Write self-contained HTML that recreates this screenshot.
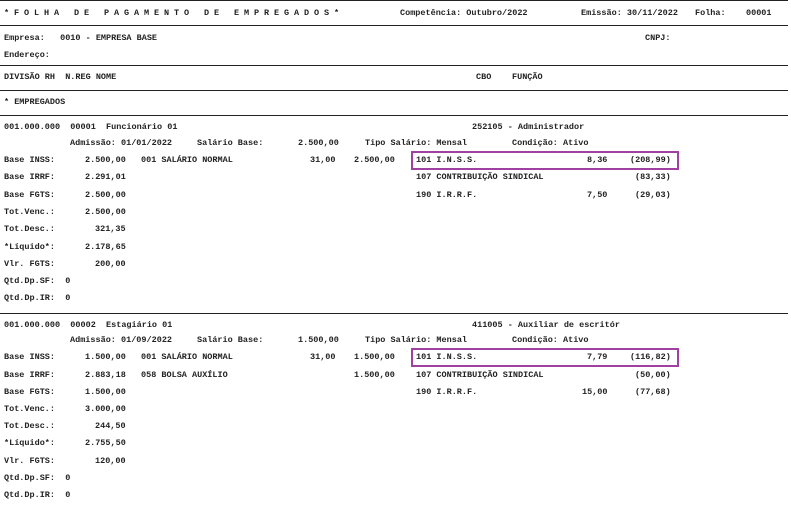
<!DOCTYPE html>
<html><head><meta charset="utf-8"><style>
body{margin:0;width:791px;height:508px;background:#fff;position:relative;overflow:hidden;font-family:"Liberation Mono",monospace;font-size:8.5px;font-weight:bold;color:#222}
i{position:absolute;font-style:normal;white-space:pre;line-height:10px}
.h{position:absolute;left:0;width:788px;height:1px;background:#222}
.box{position:absolute;border:2px solid #a040a0;box-sizing:border-box}
</style></head><body>
<div class="h" style="top:0"></div>
<i style="left:4px;top:8px;letter-spacing:4.9px">*FOLHA DE PAGAMENTO DE EMPREGADOS*</i>
<i style="left:400px;top:8px">Competência: Outubro/2022</i>
<i style="left:581px;top:8px">Emissão: 30/11/2022</i>
<i style="left:695px;top:8px">Folha:</i>
<i style="left:746px;top:8px">00001</i>
<div class="h" style="top:25px"></div>
<i style="left:4px;top:33px">Empresa:   0010 - EMPRESA BASE</i>
<i style="left:645px;top:33px">CNPJ:</i>
<i style="left:4px;top:50px">Endereço:</i>
<div class="h" style="top:65px"></div>
<i style="left:4px;top:72px">DIVISÃO RH  N.REG NOME</i>
<i style="left:476px;top:72px">CBO</i>
<i style="left:512px;top:72px">FUNÇÃO</i>
<div class="h" style="top:90px"></div>
<i style="left:4px;top:97px">* EMPREGADOS</i>
<div class="h" style="top:115px"></div>

<i style="left:4px;top:122px">001.000.000  00001  Funcionário 01</i>
<i style="left:472px;top:122px">252105 - Administrador</i>
<i style="left:70px;top:138px">Admissão: 01/01/2022</i>
<i style="left:197px;top:138px">Salário Base:</i>
<i style="left:298px;top:138px">2.500,00</i>
<i style="left:365px;top:138px">Tipo Salário: Mensal</i>
<i style="left:512px;top:138px">Condição: Ativo</i>
<i style="left:4px;top:155px">Base INSS:</i><i style="left:85px;top:155px">2.500,00</i><i style="left:141px;top:155px">001 SALÁRIO NORMAL</i><i style="left:310px;top:155px">31,00</i><i style="left:354px;top:155px">2.500,00</i>
<i style="left:416px;top:155px">101 I.N.S.S.</i><i style="left:587px;top:155px">8,36</i><i style="left:630px;top:155px">(208,99)</i>
<div class="box" style="left:411px;top:151px;width:268px;height:19px"></div>
<i style="left:4px;top:172px">Base IRRF:</i><i style="left:85px;top:172px">2.291,01</i>
<i style="left:416px;top:172px">107 CONTRIBUIÇÃO SINDICAL</i><i style="left:635px;top:172px">(83,33)</i>
<i style="left:4px;top:190px">Base FGTS:</i><i style="left:85px;top:190px">2.500,00</i>
<i style="left:416px;top:190px">190 I.R.R.F.</i><i style="left:587px;top:190px">7,50</i><i style="left:635px;top:190px">(29,03)</i>
<i style="left:4px;top:207px">Tot.Venc.:</i><i style="left:85px;top:207px">2.500,00</i>
<i style="left:4px;top:224px">Tot.Desc.:</i><i style="left:95px;top:224px">321,35</i>
<i style="left:4px;top:242px">*Líquido*:</i><i style="left:85px;top:242px">2.178,65</i>
<i style="left:4px;top:259px">Vlr. FGTS:</i><i style="left:95px;top:259px">200,00</i>
<i style="left:4px;top:276px">Qtd.Dp.SF:  0</i>
<i style="left:4px;top:293px">Qtd.Dp.IR:  0</i>
<div class="h" style="top:313px"></div>

<i style="left:4px;top:320px">001.000.000  00002  Estagiário 01</i>
<i style="left:472px;top:320px">411005 - Auxiliar de escritór</i>
<i style="left:70px;top:335px">Admissão: 01/09/2022</i>
<i style="left:197px;top:335px">Salário Base:</i>
<i style="left:298px;top:335px">1.500,00</i>
<i style="left:365px;top:335px">Tipo Salário: Mensal</i>
<i style="left:512px;top:335px">Condição: Ativo</i>
<i style="left:4px;top:352px">Base INSS:</i><i style="left:85px;top:352px">1.500,00</i><i style="left:141px;top:352px">001 SALÁRIO NORMAL</i><i style="left:310px;top:352px">31,00</i><i style="left:354px;top:352px">1.500,00</i>
<i style="left:416px;top:352px">101 I.N.S.S.</i><i style="left:587px;top:352px">7,79</i><i style="left:630px;top:352px">(116,82)</i>
<div class="box" style="left:411px;top:348px;width:268px;height:19px"></div>
<i style="left:4px;top:370px">Base IRRF:</i><i style="left:85px;top:370px">2.883,18</i><i style="left:141px;top:370px">058 BOLSA AUXÍLIO</i><i style="left:354px;top:370px">1.500,00</i>
<i style="left:416px;top:370px">107 CONTRIBUIÇÃO SINDICAL</i><i style="left:635px;top:370px">(50,00)</i>
<i style="left:4px;top:387px">Base FGTS:</i><i style="left:85px;top:387px">1.500,00</i>
<i style="left:416px;top:387px">190 I.R.R.F.</i><i style="left:582px;top:387px">15,00</i><i style="left:635px;top:387px">(77,68)</i>
<i style="left:4px;top:404px">Tot.Venc.:</i><i style="left:85px;top:404px">3.000,00</i>
<i style="left:4px;top:421px">Tot.Desc.:</i><i style="left:95px;top:421px">244,50</i>
<i style="left:4px;top:438px">*Líquido*:</i><i style="left:85px;top:438px">2.755,50</i>
<i style="left:4px;top:456px">Vlr. FGTS:</i><i style="left:95px;top:456px">120,00</i>
<i style="left:4px;top:473px">Qtd.Dp.SF:  0</i>
<i style="left:4px;top:490px">Qtd.Dp.IR:  0</i>
</body></html>
